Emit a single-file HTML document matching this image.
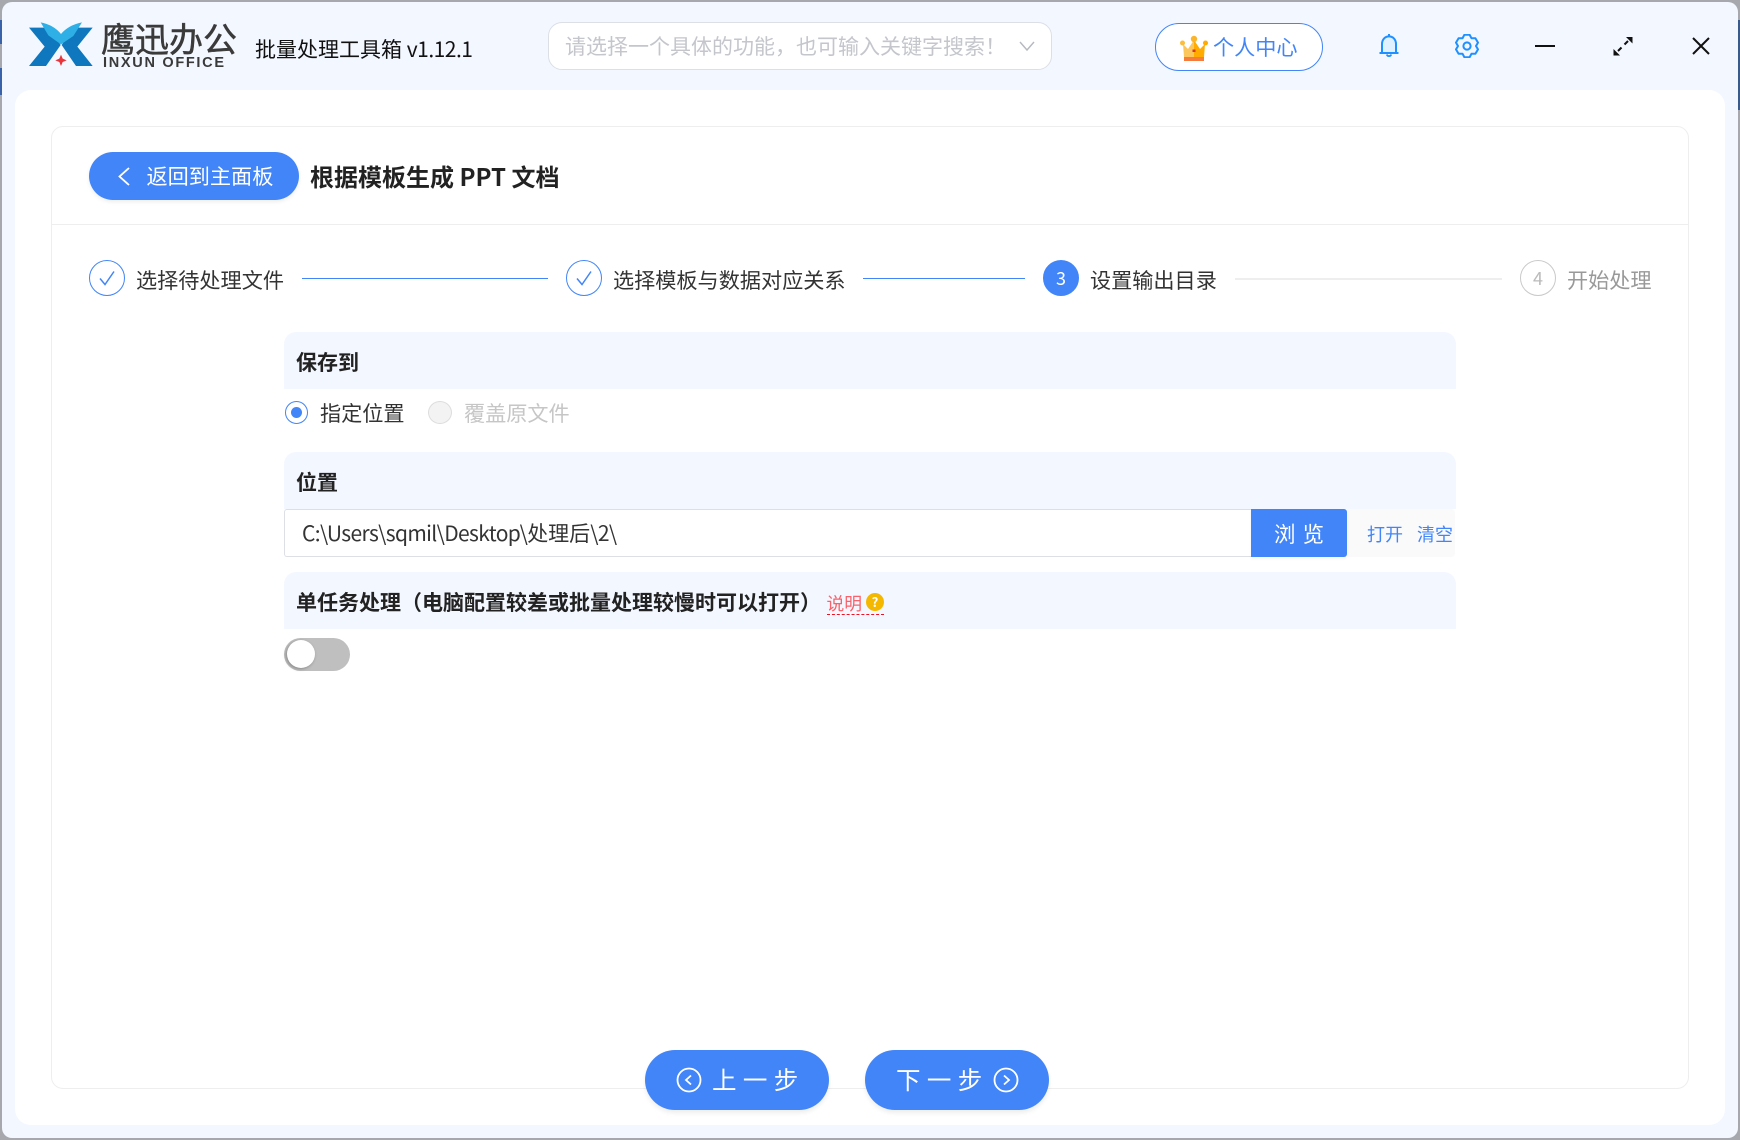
<!DOCTYPE html>
<html lang="zh-CN">
<head>
<meta charset="utf-8">
<title>鹰迅办公</title>
<style>
html,body{margin:0;padding:0;width:1740px;height:1140px;overflow:hidden;background:#a6a8ad;}
body{position:relative;font-family:"Noto Sans CJK SC","Liberation Sans",sans-serif;color:#333;}
div,svg{position:absolute;box-sizing:border-box;}
span.t{position:absolute;}
.t{white-space:nowrap;font-size:21px;line-height:30px;height:30px;}
.s{font-size:21.15px;}
.b{font-weight:700;color:#222;}
.blue{color:#4285f8;}
.hd{left:284px;width:1172px;background:#f3f7ff;border-radius:12px 12px 0 0;}
.c{width:36px;height:36px;border-radius:50%;border:1px solid #4285f8;top:260px;}
.line{top:278px;height:1px;background:#4285f8;}
.btn{background:#4285f8;top:1050px;height:60px;width:184px;border-radius:30px;box-shadow:0 3px 5px rgba(0,0,0,.07);}
</style>
</head>
<body>
<div style="left:0;top:20px;width:3px;height:24px;background:#3a62a8"></div>
<div style="left:0;top:68px;width:3px;height:27px;background:#3a62a8"></div>
<div style="right:0;top:20px;width:3px;height:90px;background:#3a5a8a"></div>
<div style="left:2px;top:2px;width:1736px;height:1136px;background:#f3f7ff;border-radius:10px"></div>
<div style="left:15px;top:90px;width:1710px;height:1035px;background:#fff;border-radius:16px"></div>
<div style="left:51px;top:126px;width:1638px;height:963px;border:1px solid #eeeeee;border-radius:12px"></div>
<div style="left:52px;top:224px;width:1636px;height:1px;background:#eeeeee"></div>

<svg style="left:20px;top:10px" width="80" height="70" viewBox="0 0 240 210">
<path d="M27 53H88L122 105L78 168H27L74 110Z" fill="#0f77bd"/>
<path d="M218 53H158L125 105L168 168H218L172 110Z" fill="#0f77bd"/>
<path d="M62 37Q102 45 123 72Q145 45 186 37L160 78L123 103L85 76Z" fill="#2eb0e6"/>
<path d="M123 134L128 146L140 151L128 156L123 168L118 156L106 151L118 146Z" fill="#e8343a"/>
</svg>
<span class="t" style="left:101px;top:14px;font-size:34px;line-height:48px;height:48px;color:#3a3a3a;-webkit-text-stroke:.5px #3a3a3a">鹰迅办公</span>
<span class="t" style="left:103px;top:54px;font-family:'Liberation Sans',sans-serif;font-weight:700;font-size:14.5px;line-height:18px;height:18px;letter-spacing:1.7px;color:#3a3a3a">INXUN OFFICE</span>
<span class="t" style="left:255px;top:34px;color:#111">批量处理工具箱 <span style="letter-spacing:-.5px">v1.12.1</span></span>

<div style="left:548px;top:22px;width:504px;height:48px;background:#fff;border:1px solid #dcdfe6;border-radius:14px"></div>
<span class="t" style="left:565px;top:31px;color:#c4c6cc">请选择一个具体的功能，也可输入关键字搜索！</span>
<svg style="left:1018px;top:40px" width="18" height="12" viewBox="0 0 18 12"><path d="M2 2L9 10L16 2" fill="none" stroke="#b5b8be" stroke-width="1.4"/></svg>

<div style="left:1155px;top:23px;width:168px;height:48px;background:#fff;border:1px solid #4285f8;border-radius:24px"></div>
<svg style="left:1179px;top:34px" width="30" height="28" viewBox="0 0 30 28">
<path d="M4 10L9 15L15 6V23H5Z" fill="#fbc75d"/>
<path d="M26 10L21 15L15 6V23H25Z" fill="#ffab00"/>
<circle cx="3.5" cy="9" r="2.5" fill="#fbbd3d"/><circle cx="26.5" cy="9" r="2.5" fill="#ffab00"/>
<circle cx="15" cy="5" r="3.2" fill="#fbb52d"/>
<rect x="5" y="23" width="20" height="4" fill="#f57c3a"/>
<rect x="13.5" y="15.5" width="3" height="2.5" fill="#d8372c"/>
</svg>
<span class="t blue s" style="left:1213px;top:32px">个人中心</span>

<svg style="left:1378px;top:33px" width="22" height="25" viewBox="0 0 22 25">
<path d="M4 20V11C4 6.5 7 3.4 11 3.4S18 6.5 18 11V20Z" fill="#dff0ff" stroke="#1e90ff" stroke-width="2"/>
<path d="M1.5 20H20.5" stroke="#1e90ff" stroke-width="2"/>
<path d="M11 1V3.4" stroke="#1e90ff" stroke-width="2"/>
<path d="M8.8 21.5A2.3 2.3 0 0 0 13.2 21.5" fill="none" stroke="#1e90ff" stroke-width="1.8"/>
</svg>
<svg style="left:1455px;top:34px" width="24" height="24" viewBox="0 0 24 24">
<g transform="translate(12 12)" fill="none" stroke="#1e90ff" stroke-width="2" stroke-linejoin="round">
<path d="M-2.6-11.2L2.6-11.2L4.5-7.8L8.4-7.8L11-3.4L9 0L11 3.4L8.4 7.8L4.5 7.8L2.6 11.2L-2.6 11.2L-4.5 7.8L-8.4 7.8L-11 3.4L-9 0L-11-3.4L-8.4-7.8L-4.5-7.8Z"/>
<circle r="3.6"/>
</g>
</svg>
<div style="left:1535px;top:45px;width:20px;height:2px;background:#111"></div>
<svg style="left:1612px;top:35px" width="22" height="22" viewBox="0 0 22 22">
<path d="M12.5 9.5L16 6" stroke="#111" stroke-width="2"/>
<path d="M14 2H20.5V8.5Z" fill="#111"/>
<path d="M9.5 12.5L6 16" stroke="#111" stroke-width="2"/>
<path d="M8 20.5H1.5V14Z" fill="#111"/>
</svg>
<svg style="left:1691px;top:36px" width="20" height="20" viewBox="0 0 20 20"><path d="M2 2L18 18M18 2L2 18" stroke="#111" stroke-width="2"/></svg>

<div style="left:89px;top:152px;width:210px;height:48px;background:#4285f8;border-radius:24px;box-shadow:0 2px 4px rgba(0,0,0,.07)"></div>
<svg style="left:116px;top:166px" width="16" height="21" viewBox="0 0 16 21"><path d="M13 2L3.5 10.5L13 19" fill="none" stroke="#fff" stroke-width="1.8"/></svg>
<span class="t s" style="left:146.5px;top:161px;color:#fff">返回到主面板</span>
<span class="t b" style="left:310px;top:159px;font-size:24px;line-height:34px;height:34px">根据模板生成 PPT 文档</span>

<div class="c" style="left:89px"></div>
<svg style="left:89px;top:260px" width="36" height="36" viewBox="0 0 36 36"><path d="M11 18.5L16 24.5L25 11.5" fill="none" stroke="#4285f8" stroke-width="1.5"/></svg>
<span class="t s" style="left:136px;top:265px">选择待处理文件</span>
<div class="line" style="left:302px;width:246px"></div>
<div class="c" style="left:566px"></div>
<svg style="left:566px;top:260px" width="36" height="36" viewBox="0 0 36 36"><path d="M11 18.5L16 24.5L25 11.5" fill="none" stroke="#4285f8" stroke-width="1.5"/></svg>
<span class="t s" style="left:613px;top:265px">选择模板与数据对应关系</span>
<div class="line" style="left:863px;width:162px"></div>
<div class="c" style="left:1043px;background:#4285f8"></div>
<span class="t" style="left:1043px;top:263px;width:36px;text-align:center;color:#fff;font-size:18px">3</span>
<span class="t s" style="left:1090px;top:265px">设置输出目录</span>
<div class="line" style="left:1235px;width:267px;background:#eeeeee;height:2px"></div>
<div class="c" style="left:1520px;border-color:#c9c9c9"></div>
<span class="t" style="left:1520px;top:263px;width:36px;text-align:center;color:#bbb;font-size:18px">4</span>
<span class="t s" style="left:1567px;top:265px;color:#999">开始处理</span>

<div class="hd" style="top:332px;height:57px"></div>
<span class="t b" style="left:296px;top:347px">保存到</span>
<div style="left:285px;top:401px;width:23px;height:23px;border-radius:50%;border:1px solid #4285f8;background:#fff"></div>
<div style="left:291px;top:407px;width:11px;height:11px;border-radius:50%;background:#4285f8"></div>
<span class="t s" style="left:320px;top:398px">指定位置</span>
<div style="left:428px;top:401px;width:24px;height:23px;border-radius:50%;border:1px solid #ddd;background:#f3f3f3"></div>
<span class="t s" style="left:464px;top:398px;color:#c6c6c6">覆盖原文件</span>

<div class="hd" style="top:452px;height:57px"></div>
<span class="t b" style="left:296px;top:467px">位置</span>
<div style="left:284px;top:509px;width:968px;height:48px;background:#fff;border:1px solid #dcdfe6;border-right:0;border-radius:3px 0 0 3px"></div>
<span class="t" style="left:302px;top:518px"><span style="letter-spacing:-.63px">C:\Users\sqmil\Desktop\</span>处理后<span style="letter-spacing:-.6px">\2\</span></span>
<div style="left:1347px;top:509px;width:108px;height:48px;background:#fafafa;border-radius:0 4px 4px 0"></div>
<div style="left:1251px;top:509px;width:96px;height:48px;background:#4285f8;border-radius:0 3px 3px 0;box-shadow:0 2px 3px rgba(0,0,0,.04)"></div>
<span class="t" style="left:1274px;top:519px;color:#fff;font-size:21.5px;letter-spacing:7px">浏览</span>
<span class="t blue" style="left:1367px;top:519px;font-size:18px">打开</span>
<span class="t blue" style="left:1417px;top:519px;font-size:18px">清空</span>

<div class="hd" style="top:572px;height:57px"></div>
<span class="t b" style="left:296px;top:587px">单任务处理（电脑配置较差或批量处理较慢时可以打开）</span>
<span class="t" style="left:826.5px;top:588px;font-size:17.8px;color:#f9626a">说明</span>
<div style="left:866px;top:593px;width:18px;height:18px;border-radius:50%;background:#f5b800"></div>
<span class="t" style="left:866px;top:587px;width:18px;text-align:center;font-size:13px;font-weight:700;color:#fff">?</span>
<div style="left:827px;top:614px;width:57px;height:0;border-top:1px dashed #f01020"></div>
<div style="left:284px;top:638px;width:66px;height:33px;border-radius:17px;background:#bfbfbf"></div>
<div style="left:286.5px;top:640px;width:28px;height:28px;border-radius:50%;background:#fff;box-shadow:-1px 1px 3px rgba(0,0,0,.3)"></div>

<div class="btn" style="left:645px"></div>
<svg style="left:676px;top:1067px" width="26" height="26" viewBox="0 0 26 26"><circle cx="13" cy="13" r="11.5" fill="none" stroke="#fff" stroke-width="1.8"/><path d="M15 8.5L10 13L15 17.5" fill="none" stroke="#fff" stroke-width="1.8"/></svg>
<span class="t" style="left:712px;top:1063px;color:#fff;font-size:24.5px;line-height:34px;height:34px;letter-spacing:6.4px">上一步</span>
<div class="btn" style="left:865px"></div>
<span class="t" style="left:896px;top:1063px;color:#fff;font-size:24.5px;line-height:34px;height:34px;letter-spacing:6.4px">下一步</span>
<svg style="left:993px;top:1067px" width="26" height="26" viewBox="0 0 26 26"><circle cx="13" cy="13" r="11.5" fill="none" stroke="#fff" stroke-width="1.8"/><path d="M11 8.5L16 13L11 17.5" fill="none" stroke="#fff" stroke-width="1.8"/></svg>
</body>
</html>
